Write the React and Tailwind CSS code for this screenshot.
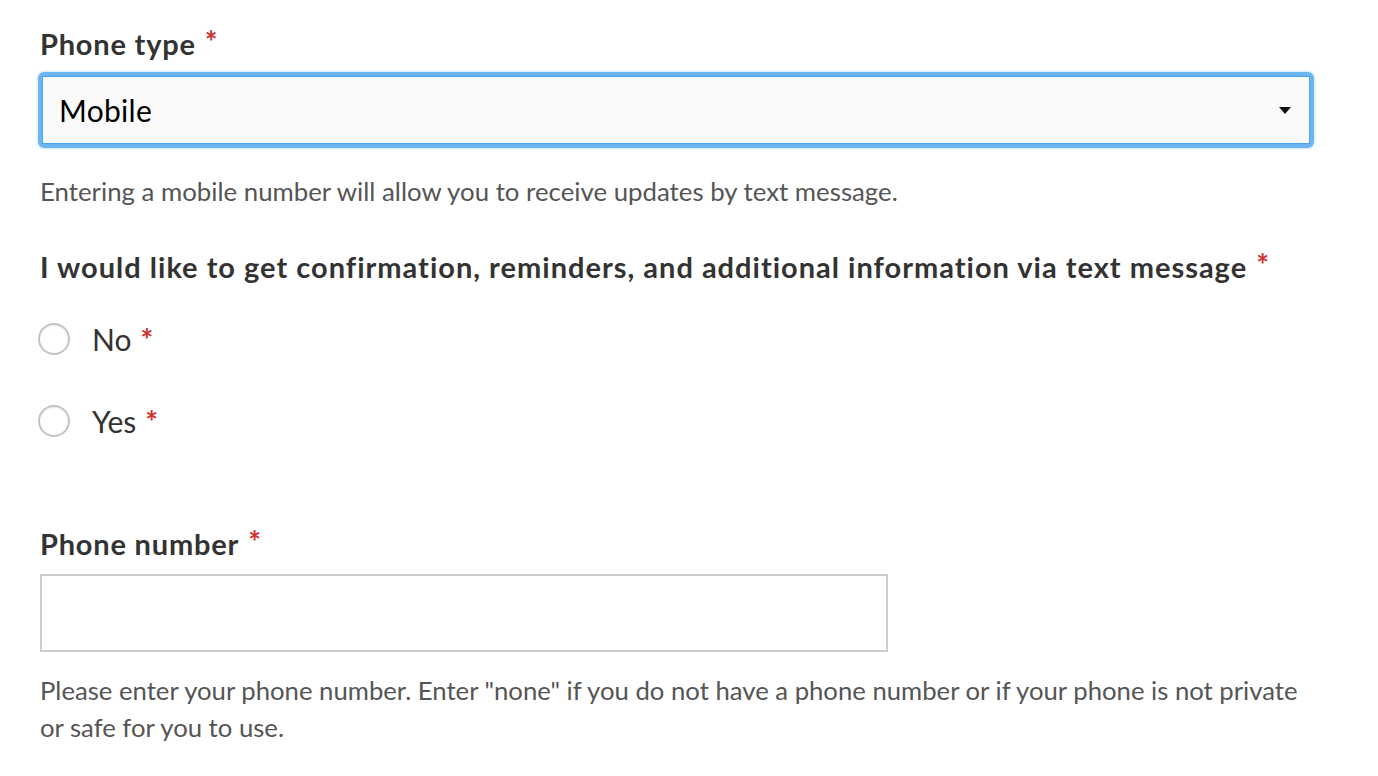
import React from "react";

function Star() {
  return <span className="ml-[9px] align-top text-[30px] font-bold leading-none tracking-normal text-[#d0312d]">*</span>;
}

function Radio({ label, top }) {
  return (
    <label className={`-ml-[2px] flex items-center ${top}`}>
      <span className="h-[32px] w-[32px] rounded-full border-2 border-[#c4c4c4] bg-white shadow-[inset_0_1px_2px_rgba(0,0,0,0.08)]" />
      <span className="ml-[22px] text-[30px] leading-none text-[#333]">{label}</span>
      <Star />
    </label>
  );
}

export default function App() {
  return (
    <div
      className="min-h-screen bg-white pl-[40px] pr-[64px] pt-[26px] text-[#333]"
      style={{ fontFamily: "Lato, 'Open Sans', sans-serif" }}
    >
      <div className="text-[29px] font-bold leading-[36px] tracking-[0.8px]">
        Phone type<Star />
      </div>
      <div className="-ml-[2px] mt-[10px] rounded-[6px] border-[4px] border-[#6bb6f2] p-0 shadow-[0_0_3px_#9fd0f8]">
        <div className="flex h-[68px] items-center justify-between border-[1px] border-[#4aa3ec] bg-[#fafafa] pl-[16px] pr-[18px]">
          <span className="text-[30px] tracking-[0.3px] text-black">Mobile</span>
          <svg width="12" height="7" viewBox="0 0 12 7"><path d="M0 0h12L6 7z" fill="#111" /></svg>
        </div>
      </div>
      <p className="mt-[27px] text-[25.8px] leading-[32px] text-[#555]">
        Entering a mobile number will allow you to receive updates by text message.
      </p>
      <div className="mt-[42px] text-[29px] font-bold leading-[36px] tracking-[1px]">
        I would like to get confirmation, reminders, and additional information via text message<Star />
      </div>
      <Radio label="No" top="mt-[38px]" />
      <Radio label="Yes" top="mt-[50px]" />
      <div className="mt-[89px] text-[29px] font-bold leading-[36px] tracking-[0.8px]">
        Phone number<Star />
      </div>
      <input className="mt-[12px] block h-[78px] w-[848px] border-2 border-[#cccccc] bg-white outline-none" />
      <p className="mt-[20px] max-w-[1300px] text-[25.7px] leading-[37px] text-[#555]">
        Please enter your phone number. Enter "none" if you do not have a phone number or if your phone is not private or safe for you to use.
      </p>
    </div>
  );
}
